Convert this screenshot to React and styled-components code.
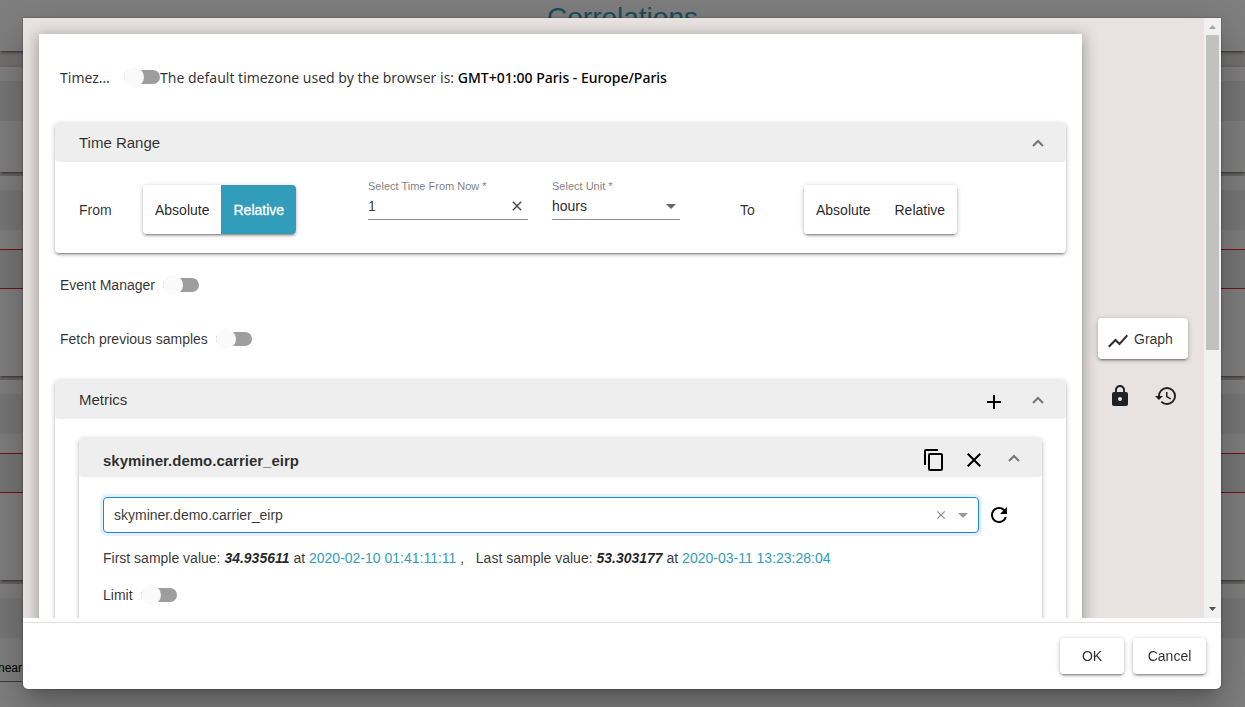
import {useState} from 'react';
import styled, {createGlobalStyle} from 'styled-components';
import {
  MdAdd,
  MdArrowDropDown,
  MdClose,
  MdContentCopy,
  MdHistory,
  MdLock,
  MdRefresh,
  MdShowChart,
} from 'react-icons/md';

const raised =
  '0 3px 1px -2px rgba(0, 0, 0, 0.2), 0 2px 2px 0 rgba(0, 0, 0, 0.16), 0 1px 5px 0 rgba(0, 0, 0, 0.24)';

const GlobalStyle = createGlobalStyle`
  * {
    box-sizing: border-box;
  }
  body {
    margin: 0;
    overflow: hidden;
    background-color: #e8e3e0;
    color: rgba(0, 0, 0, 0.82);
    font-family: 'Liberation Sans', Arial, sans-serif;
    font-size: 14px;
  }
  button, input, select {
    font: inherit;
    color: inherit;
  }
`;

/* page behind the dialog */
const Page = styled.div`
  height: 100vh;
  overflow: hidden;
`;

const PageHead = styled.header`
  height: 51px;
  background-color: white;
  box-shadow: ${raised};
  text-align: center;
  overflow: hidden;
`;

const PageTitle = styled.h1`
  margin: 0;
  color: #2f9dbb;
  font-size: 28px;
  font-weight: 400;
  line-height: 36px;
`;

const PageCard = styled.section`
  height: ${props => props.$height}px;
  margin-bottom: 4px;
  padding-top: 14px;
  background-color: white;
  box-shadow: ${raised};
`;

const PageCards = styled.main`
  padding-top: 16px;
`;

const PageBar = styled.div`
  height: 40px;
  background-color: #eee;
`;

const ErrorBar = styled(PageBar)`
  margin-top: 19px;
  border-top: 1px solid #f0202c;
  border-bottom: 1px solid #f0202c;
`;

const ScaleField = styled.div`
  display: flex;
  justify-content: flex-end;
  align-items: center;
  width: 22px;
  height: 28px;
  margin-top: 16px;
  overflow: hidden;
  border-bottom: 1px solid #777;
  font-size: 12px;
  color: black;
`;

/* dialog */
const Backdrop = styled.div`
  position: fixed;
  inset: 0;
  padding: 18px 24px 18px 23px;
  background-color: rgba(0, 0, 0, 0.5);
`;

const Dialog = styled.div`
  display: flex;
  flex-direction: column;
  height: 100%;
  background-color: white;
  border-radius: 0 0 5px 5px;
  box-shadow: 0 0 2px rgba(0, 0, 0, 0.5), 0 11px 15px -7px rgba(0, 0, 0, 0.2),
    0 24px 38px 3px rgba(0, 0, 0, 0.14), 0 9px 46px 8px rgba(0, 0, 0, 0.12);
`;

const Content = styled.div`
  flex: 1;
  display: flex;
  min-height: 0;
  margin-bottom: 4px;
  background-color: #e8e3e0;
  overflow: hidden;
`;

const Form = styled.form`
  flex: 1;
  align-self: flex-start;
  margin: 16px 0 0 16px;
  padding: 16px;
  background-color: white;
  box-shadow: 0 5px 5px -3px rgba(0, 0, 0, 0.2), 0 3px 14px 2px rgba(0, 0, 0, 0.3);
`;

const Side = styled.div`
  width: 122px;
  padding: 300px 16px 0;
`;

const SideIcons = styled.div`
  display: flex;
  justify-content: space-between;
  padding: 25px 10px 0;
`;

const Row = styled.div`
  display: flex;
  align-items: center;
  height: 54px;
  padding-left: 5px;
  gap: 8px;
`;

const ZoneLabel = styled.label`
  width: 56px;
  margin-right: 8px;
  overflow: hidden;
  text-overflow: ellipsis;
  white-space: nowrap;
`;

const ZoneRow = styled(Row)`
  gap: 0;
  margin-bottom: 19px;
  font-family: 'Noto Sans', 'Open Sans', sans-serif;
`;

const ZoneText = styled.span`
  b {
    font-weight: 500;
    color: black;
  }
`;

const Switch = styled.input.attrs({type: 'checkbox', role: 'switch'})`
  appearance: none;
  display: grid;
  align-items: center;
  flex: none;
  width: 36px;
  height: 20px;
  margin: 0;
  cursor: pointer;

  &::before,
  &::after {
    content: '';
    grid-area: 1 / 1;
  }
  &::before {
    height: 14px;
    border-radius: 7px;
    background-color: #9e9e9e;
  }
  &::after {
    width: 20px;
    height: 20px;
    border-radius: 50%;
    background-color: #fafafa;
  }
  &:checked::after {
    justify-self: end;
    background-color: #319dbb;
  }
`;

const Panel = styled.section`
  border-radius: 4px;
  background-color: white;
  box-shadow: ${raised};
`;

const PanelHead = styled.header`
  display: flex;
  align-items: center;
  height: 39px;
  padding: 0 22px 0 24px;
  border-radius: 4px;
  background-color: #eee;
`;

const PanelTitle = styled.h2`
  flex: 1;
  margin: 0;
  font-size: 15px;
  font-weight: 400;
`;

const MetricTitle = styled(PanelTitle)`
  padding-top: 6px;
  font-weight: 700;
`;

const IconButton = styled.button.attrs({type: 'button'})`
  display: flex;
  align-items: center;
  justify-content: center;
  flex: none;
  width: ${props => props.$width || 24}px;
  height: 24px;
  margin: 0;
  padding: 0;
  border: none;
  background: none;
  color: ${props => props.$color || 'black'};
  cursor: pointer;
`;

const Tools = styled.div`
  display: flex;
  align-items: center;
  gap: 16px;
  padding-top: 4px;
  margin-right: ${props => props.$after}px;
`;

const RangeBody = styled.div`
  display: grid;
  grid-template-columns: 64fr 225fr 184fr 188fr 64fr 238fr;
  align-items: center;
  padding: 23px 24px 19px;
`;

const Toggle = styled.div`
  display: flex;
  justify-self: start;
  height: 49px;
  border-radius: 4px;
  box-shadow: ${raised};
  overflow: hidden;
`;

const ToggleButton = styled.button.attrs({type: 'button'})`
  padding: 0 12px;
  border: none;
  background-color: ${props => (props.$active ? '#319dbb' : 'white')};
  color: ${props => (props.$active ? 'white' : 'rgba(0, 0, 0, 0.87)')};
  -webkit-text-stroke: ${props => (props.$active ? '0.3px white' : '0')};
  cursor: pointer;
`;

const Field = styled.div`
  align-self: start;
  width: ${props => props.$width}px;
  margin-top: -5px;
`;

const FieldLabel = styled.label`
  display: block;
  color: rgba(0, 0, 0, 0.54);
  font-size: 11px;
  line-height: 12px;
`;

const Underline = styled.div`
  display: flex;
  align-items: center;
  height: 28px;
  border-bottom: 1px solid #8c8c8c;
  color: rgba(0, 0, 0, 0.6);
`;

const TextInput = styled.input`
  flex: 1;
  min-width: 0;
  padding: 0;
  border: none;
  outline: none;
  background: none;
  color: rgba(0, 0, 0, 0.8);
`;

const UnitSelect = styled.select`
  appearance: none;
  flex: 1;
  min-width: 0;
  padding: 0;
  border: none;
  outline: none;
  background: none;
  color: rgba(0, 0, 0, 0.87);
`;

const SelectArrow = styled(MdArrowDropDown).attrs({size: 24})`
  flex: none;
  margin-right: -3px;
`;

const MetricsPanel = styled(Panel)`
  margin-top: 14px;
`;

const MetricsBody = styled.div`
  padding: 19px 24px 24px;
`;

const MetricBody = styled.div`
  padding: 20px 24px 24px;
`;

const MetricRow = styled.div`
  display: flex;
  align-items: center;
`;

const Combo = styled.div`
  flex: 1;
  display: flex;
  align-items: center;
  height: 36px;
  padding: 0 6px 0 10px;
  border: 1px solid #1b82f0;
  border-radius: 4px;
  box-shadow: 0 0 0 3px #e5f2fd;
  color: #999;
`;

const Samples = styled.p`
  margin: 17px 0 0;
  line-height: 16px;
  white-space: pre-wrap;
  color: rgba(0, 0, 0, 0.8);

  a {
    color: #319dbb;
    text-decoration: none;
  }
  em {
    font-weight: 700;
    color: rgba(0, 0, 0, 0.87);
  }
`;

const LimitRow = styled.div`
  display: flex;
  align-items: center;
  gap: 8px;
  margin-top: 19px;
  padding-bottom: 24px;
`;

const RaisedButton = styled.button.attrs({type: 'button'})`
  width: ${props => props.$width}px;
  height: 36px;
  padding: 0;
  border: none;
  border-radius: 4px;
  background-color: white;
  box-shadow: ${raised};
  cursor: pointer;
`;

const GraphButton = styled(RaisedButton)`
  display: flex;
  align-items: center;
  gap: 4px;
  width: 100%;
  height: 41px;
  padding-left: 8px;

  svg {
    margin-top: 4px;
  }
`;

const Switches = styled.div`
  margin-top: 5px;
`;

const Footer = styled.footer`
  display: flex;
  justify-content: flex-end;
  gap: 9px;
  padding: 15px;
  border-top: 1px solid #e0e0e0;
`;

const ScrollBar = styled.div`
  display: flex;
  flex-direction: column;
  align-items: center;
  width: 17px;
  background-color: #f1f1f1;
`;

const ScrollThumb = styled.div`
  width: 13px;
  height: 315px;
  margin-bottom: auto;
  background-color: #c1c1c1;
`;

const ScrollArrow = ({down}) => (
  <svg width="17" height="17" viewBox="0 0 17 17" aria-hidden="true">
    <path d={down ? 'M5 6h7L8.500 10z' : 'M5 11h7L8.500 7z'} fill={down ? '#505050' : '#a3a3a3'} />
  </svg>
);

const Chevron = () => (
  <svg width="12" height="8" viewBox="0 0 12 8" fill="none" aria-hidden="true">
    <path d="M1 7l5-5 5 5" stroke="#757575" strokeWidth="2" />
  </svg>
);

const Collapse = () => (
  <IconButton $width={12} aria-label="Collapse">
    <Chevron />
  </IconButton>
);

function RangeToggle({value, onChange}) {
  return (
    <Toggle>
      {['Absolute', 'Relative'].map(name => (
        <ToggleButton key={name} $active={value === name} onClick={() => onChange(name)}>
          {name}
        </ToggleButton>
      ))}
    </Toggle>
  );
}

function TimeRange() {
  const [from, setFrom] = useState('Relative');
  const [to, setTo] = useState('');
  const [amount, setAmount] = useState('1');
  return (
    <Panel>
      <PanelHead>
        <PanelTitle>Time Range</PanelTitle>
        <Collapse />
      </PanelHead>
      <RangeBody>
        <span>From</span>
        <RangeToggle value={from} onChange={setFrom} />
        <Field $width={160}>
          <FieldLabel htmlFor="amount">Select Time From Now *</FieldLabel>
          <Underline>
            <TextInput id="amount" value={amount} onChange={e => setAmount(e.target.value)} />
            <IconButton $width={22} $color="#444" aria-label="Clear" onClick={() => setAmount('')}>
              <MdClose size={16} />
            </IconButton>
          </Underline>
        </Field>
        <Field $width={128}>
          <FieldLabel htmlFor="unit">Select Unit *</FieldLabel>
          <Underline>
            <UnitSelect id="unit" defaultValue="hours">
              <option>minutes</option>
              <option>hours</option>
              <option>days</option>
            </UnitSelect>
            <SelectArrow />
          </Underline>
        </Field>
        <span>To</span>
        <RangeToggle value={to} onChange={setTo} />
      </RangeBody>
    </Panel>
  );
}

function Metrics() {
  const [metric, setMetric] = useState('skyminer.demo.carrier_eirp');
  return (
    <MetricsPanel>
      <PanelHead>
        <PanelTitle>Metrics</PanelTitle>
        <Tools $after={26}>
          <IconButton aria-label="Add metric">
            <MdAdd size={24} />
          </IconButton>
        </Tools>
        <Collapse />
      </PanelHead>
      <MetricsBody>
        <Panel>
          <PanelHead>
            <MetricTitle>skyminer.demo.carrier_eirp</MetricTitle>
            <Tools $after={22}>
              <IconButton aria-label="Copy">
                <MdContentCopy size={24} />
              </IconButton>
              <IconButton aria-label="Remove">
                <MdClose size={24} />
              </IconButton>
            </Tools>
            <Collapse />
          </PanelHead>
          <MetricBody>
            <MetricRow>
              <Combo>
                <TextInput
                  aria-label="Metric"
                  value={metric}
                  onChange={e => setMetric(e.target.value)}
                />
                <IconButton $width={20} $color="#888" aria-label="Clear" onClick={() => setMetric('')}>
                  <MdClose size={14} />
                </IconButton>
                <SelectArrow />
              </Combo>
              <IconButton $width={39} aria-label="Refresh">
                <MdRefresh size={24} />
              </IconButton>
            </MetricRow>
            <Samples>
              First sample value: <em>34.935611</em> at <a href="#first">2020-02-10 01:41:11:11</a>
              {' ,   '}Last sample value: <em>53.303177</em> at{' '}
              <a href="#last">2020-03-11 13:23:28:04</a>
            </Samples>
            <LimitRow>
              <label htmlFor="limit">Limit</label>
              <Switch id="limit" />
            </LimitRow>
          </MetricBody>
        </Panel>
      </MetricsBody>
    </MetricsPanel>
  );
}

function App() {
  return (
    <>
      <GlobalStyle />
      <Page>
        <PageHead>
          <PageTitle>Correlations</PageTitle>
        </PageHead>
        <PageCards>
          <PageCard $height={105}>
            <PageBar />
          </PageCard>
          <PageCard $height={200}>
            <PageBar />
            <ErrorBar />
          </PageCard>
          <PageCard $height={200}>
            <PageBar />
            <ErrorBar />
          </PageCard>
          <PageCard $height={200}>
            <PageBar />
            <ScaleField>Linear</ScaleField>
          </PageCard>
        </PageCards>
      </Page>
      <Backdrop>
        <Dialog role="dialog" aria-modal="true">
          <Content>
            <Form>
              <ZoneRow>
                <ZoneLabel htmlFor="timezone">Timezone</ZoneLabel>
                <Switch id="timezone" />
                <ZoneText>
                  The default timezone used by the browser is: <b>GMT+01:00 Paris - Europe/Paris</b>
                </ZoneText>
              </ZoneRow>
              <TimeRange />
              <Switches>
                <Row>
                  <label htmlFor="events">Event Manager</label>
                  <Switch id="events" />
                </Row>
                <Row>
                  <label htmlFor="previous">Fetch previous samples</label>
                  <Switch id="previous" />
                </Row>
              </Switches>
              <Metrics />
            </Form>
            <Side>
              <GraphButton>
                <MdShowChart size={24} />
                Graph
              </GraphButton>
              <SideIcons>
                <IconButton $color="#212121" aria-label="Lock">
                  <MdLock size={24} />
                </IconButton>
                <IconButton $color="#212121" aria-label="History">
                  <MdHistory size={24} />
                </IconButton>
              </SideIcons>
            </Side>
            <ScrollBar>
              <ScrollArrow />
              <ScrollThumb />
              <ScrollArrow down />
            </ScrollBar>
          </Content>
          <Footer>
            <RaisedButton $width={64}>OK</RaisedButton>
            <RaisedButton $width={73}>Cancel</RaisedButton>
          </Footer>
        </Dialog>
      </Backdrop>
    </>
  );
}

export default App;
